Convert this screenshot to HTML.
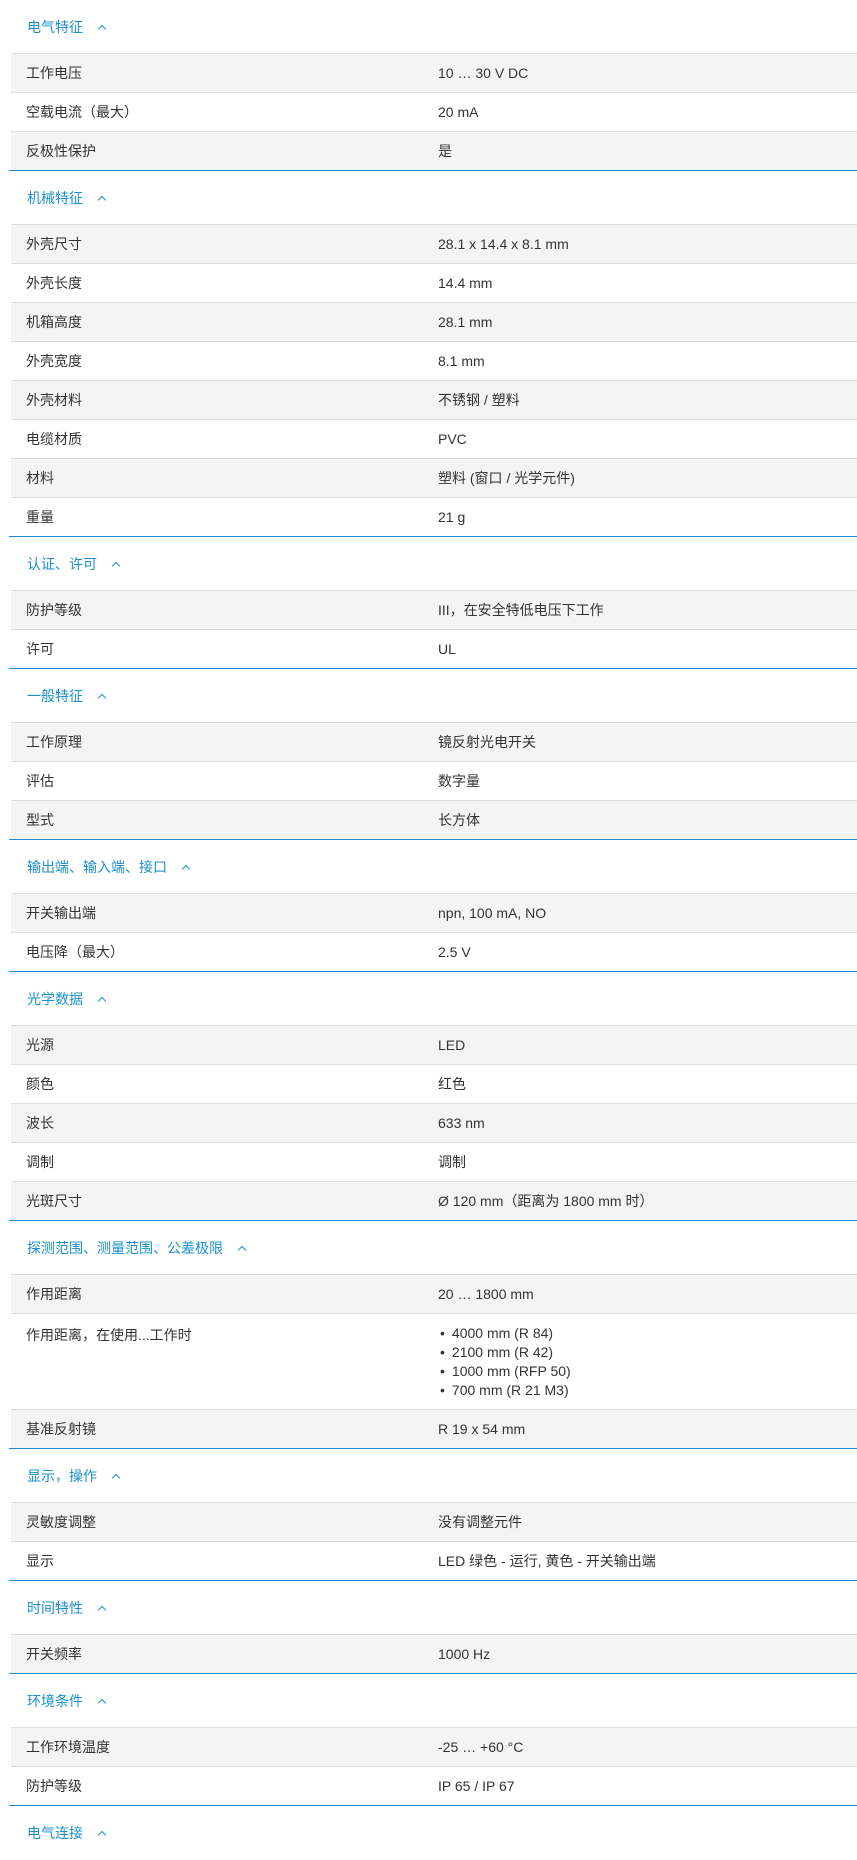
<!DOCTYPE html>
<html><head><meta charset="utf-8"><style>
*{margin:0;padding:0;box-sizing:border-box}
body{width:857px;height:1858px;overflow:hidden;background:#fff;font-family:"Liberation Sans","Noto Sans CJK SC",sans-serif;font-size:14px;color:#333}
.h{height:53px;line-height:54px;padding-left:27px;color:#1a8fcf;font-size:14px}
.h span{display:inline-block;margin-left:16px;width:6px;height:6px;border-left:1px solid #1a8fcf;border-top:1px solid #1a8fcf;transform:rotate(45deg);position:relative;top:0px}
.sec{margin-left:9px;border-bottom:1px solid #1a8fcf}
.r{height:39px;line-height:38px;margin-left:2px;border-top:1px solid #ddd;position:relative;padding-left:15px}
.sec .r:nth-child(odd){background:#f4f4f4}
.r b{font-weight:normal;position:absolute;left:427px;top:0}
.m{height:96px;line-height:19px;padding-top:12px}
.m ul{position:absolute;left:427px;top:10px;list-style:none}
.m li:before{content:"•";margin-right:7px;margin-left:2px}
</style></head><body>
<div class="h">电气特征<span></span></div>
<div class="sec"><div class="r">工作电压<b>10 … 30 V DC</b></div><div class="r">空载电流（最大）<b>20 mA</b></div><div class="r">反极性保护<b>是</b></div></div>
<div class="h">机械特征<span></span></div>
<div class="sec"><div class="r">外壳尺寸<b>28.1 x 14.4 x 8.1 mm</b></div><div class="r">外壳长度<b>14.4 mm</b></div><div class="r">机箱高度<b>28.1 mm</b></div><div class="r">外壳宽度<b>8.1 mm</b></div><div class="r">外壳材料<b>不锈钢 / 塑料</b></div><div class="r">电缆材质<b>PVC</b></div><div class="r">材料<b>塑料 (窗口 / 光学元件)</b></div><div class="r">重量<b>21 g</b></div></div>
<div class="h">认证、许可<span></span></div>
<div class="sec"><div class="r">防护等级<b>III，在安全特低电压下工作</b></div><div class="r">许可<b>UL</b></div></div>
<div class="h">一般特征<span></span></div>
<div class="sec"><div class="r">工作原理<b>镜反射光电开关</b></div><div class="r">评估<b>数字量</b></div><div class="r">型式<b>长方体</b></div></div>
<div class="h">输出端、输入端、接口<span></span></div>
<div class="sec"><div class="r">开关输出端<b>npn, 100 mA, NO</b></div><div class="r">电压降（最大）<b>2.5 V</b></div></div>
<div class="h">光学数据<span></span></div>
<div class="sec"><div class="r">光源<b>LED</b></div><div class="r">颜色<b>红色</b></div><div class="r">波长<b>633 nm</b></div><div class="r">调制<b>调制</b></div><div class="r">光斑尺寸<b>Ø 120 mm（距离为 1800 mm 时）</b></div></div>
<div class="h">探测范围、测量范围、公差极限<span></span></div>
<div class="sec"><div class="r">作用距离<b>20 … 1800 mm</b></div><div class="r m">作用距离，在使用...工作时<ul><li>4000 mm (R 84)</li><li>2100 mm (R 42)</li><li>1000 mm (RFP 50)</li><li>700 mm (R 21 M3)</li></ul></div><div class="r">基准反射镜<b>R 19 x 54 mm</b></div></div>
<div class="h">显示，操作<span></span></div>
<div class="sec"><div class="r">灵敏度调整<b>没有调整元件</b></div><div class="r">显示<b>LED 绿色 - 运行, 黄色 - 开关输出端</b></div></div>
<div class="h">时间特性<span></span></div>
<div class="sec"><div class="r">开关频率<b>1000 Hz</b></div></div>
<div class="h">环境条件<span></span></div>
<div class="sec"><div class="r">工作环境温度<b>-25 … +60 °C</b></div><div class="r">防护等级<b>IP 65 / IP 67</b></div></div>
<div class="h">电气连接<span></span></div>
</body></html>
